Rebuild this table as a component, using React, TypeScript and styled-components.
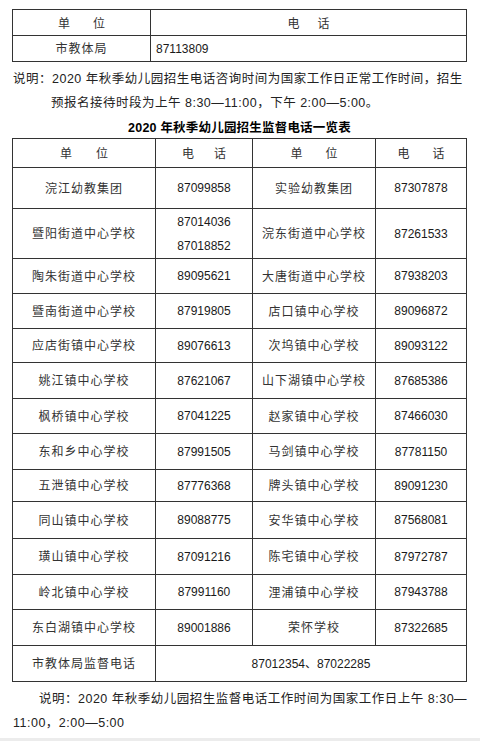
import * as React from 'react';
import styled, { createGlobalStyle } from 'styled-components';

const GlobalStyle = createGlobalStyle`
	html, body {
		margin: 0;
		padding: 0;
		background: #ececec;
	}
	body {
		font-family: 'Liberation Sans', 'Noto Sans CJK SC', sans-serif;
		color: #222;
	}
`;

type Row = {
	h: number;
	a: string;
	ap: string[];
	b: string;
	bp: string;
};

const rows: Row[] = [
	{ h: 41, a: '浣江幼教集团', ap: ['87099858'], b: '实验幼教集团', bp: '87307878' },
	{ h: 50, a: '暨阳街道中心学校', ap: ['87014036', '87018852'], b: '浣东街道中心学校', bp: '87261533' },
	{ h: 35, a: '陶朱街道中心学校', ap: ['89095621'], b: '大唐街道中心学校', bp: '87938203' },
	{ h: 35, a: '暨南街道中心学校', ap: ['87919805'], b: '店口镇中心学校', bp: '89096872' },
	{ h: 34, a: '应店街镇中心学校', ap: ['89076613'], b: '次坞镇中心学校', bp: '89093122' },
	{ h: 36, a: '姚江镇中心学校', ap: ['87621067'], b: '山下湖镇中心学校', bp: '87685386' },
	{ h: 35, a: '枫桥镇中心学校', ap: ['87041225'], b: '赵家镇中心学校', bp: '87466030' },
	{ h: 36, a: '东和乡中心学校', ap: ['87991505'], b: '马剑镇中心学校', bp: '87781150' },
	{ h: 32, a: '五泄镇中心学校', ap: ['87776368'], b: '牌头镇中心学校', bp: '89091230' },
	{ h: 37, a: '同山镇中心学校', ap: ['89088775'], b: '安华镇中心学校', bp: '87568081' },
	{ h: 36, a: '璜山镇中心学校', ap: ['87091216'], b: '陈宅镇中心学校', bp: '87972787' },
	{ h: 35, a: '岭北镇中心学校', ap: ['87991160'], b: '浬浦镇中心学校', bp: '87943788' },
	{ h: 36, a: '东白湖镇中心学校', ap: ['89001886'], b: '荣怀学校', bp: '87322685' },
];

const HeadLabel = ({ text, gap }: { text: [string, string]; gap: number }) => (
	<HeadText $gap={gap}>
		<span>{text[0]}</span>
		<span>{text[1]}</span>
	</HeadText>
);

const App = () => {
	return (
		<>
			<GlobalStyle />
			<Page>
				<Table>
					<colgroup>
						<col style={{ width: 138 }} />
						<col />
					</colgroup>
					<tbody>
						<Tr $h={26}>
							<Td>
								<HeadLabel text={['单', '位']} gap={23} />
							</Td>
							<Td>
								<HeadLabel text={['电', '话']} gap={18} />
							</Td>
						</Tr>
						<Tr $h={26}>
							<Td>
								<Unit>市教体局</Unit>
							</Td>
							<Td $left>
								<Phone>87113809</Phone>
							</Td>
						</Tr>
					</tbody>
				</Table>

				<Note $top={5}>
					<NoteLine>说明：2020 年秋季幼儿园招生电话咨询时间为国家工作日正常工作时间，招生</NoteLine>
					<NoteLine $indent={39}>预报名接待时段为上午 8:30—11:00，下午 2:00—5:00。</NoteLine>
				</Note>

				<Title>2020 年秋季幼儿园招生监督电话一览表</Title>

				<Table>
					<colgroup>
						<col style={{ width: 143 }} />
						<col style={{ width: 97 }} />
						<col style={{ width: 123 }} />
						<col />
					</colgroup>
					<tbody>
						<Tr $h={29}>
							<Td>
								<HeadLabel text={['单', '位']} gap={24} />
							</Td>
							<Td>
								<HeadLabel text={['电', '话']} gap={20} />
							</Td>
							<Td>
								<HeadLabel text={['单', '位']} gap={23} />
							</Td>
							<Td>
								<HeadLabel text={['电', '话']} gap={23} />
							</Td>
						</Tr>
						{rows.map((r) => (
							<Tr key={r.a} $h={r.h}>
								<Td>
									<Unit>{r.a}</Unit>
								</Td>
								<Td>
									{r.ap.map((p) => (
										<Phone key={p} $stack={r.ap.length > 1}>
											{p}
										</Phone>
									))}
								</Td>
								<Td>
									<Unit>{r.b}</Unit>
								</Td>
								<Td>
									<Phone>{r.bp}</Phone>
								</Td>
							</Tr>
						))}
						<Tr $h={36}>
							<Td>
								<Unit>市教体局监督电话</Unit>
							</Td>
							<Td colSpan={3}>
								<Phone>87012354、87022285</Phone>
							</Td>
						</Tr>
					</tbody>
				</Table>

				<Note $top={5}>
					<NoteLine $indent={27}>说明：2020 年秋季幼儿园招生监督电话工作时间为国家工作日上午 8:30—</NoteLine>
					<NoteLine>11:00，2:00—5:00</NoteLine>
				</Note>
			</Page>
		</>
	);
};

const Page = styled.div`
	width: 480px;
	height: 738px;
	box-sizing: border-box;
	padding: 9px 13px 0 12px;
	background: #fff;
	overflow: hidden;
`;

const Table = styled.table`
	width: 455px;
	border-collapse: collapse;
	table-layout: fixed;
	border: 1px solid #333;
`;

const Tr = styled.tr<{ $h: number }>`
	height: ${(p) => p.$h}px;
`;

const Td = styled.td<{ $left?: boolean }>`
	border: 1px solid #333;
	padding: 0 ${(p) => (p.$left ? '5px' : '0')};
	text-align: ${(p) => (p.$left ? 'left' : 'center')};
	vertical-align: middle;
	box-sizing: border-box;
`;

const HeadText = styled.div<{ $gap: number }>`
	display: inline-flex;
	gap: ${(p) => p.$gap}px;
	font-size: 12px;
	line-height: 16px;
	color: #333;
	padding-top: 2px;
`;

const Unit = styled.div`
	font-size: 12px;
	letter-spacing: 1px;
	line-height: 16px;
	color: #333;
	padding-top: 1px;
`;

const Phone = styled.div<{ $stack?: boolean }>`
	font-size: 12px;
	line-height: ${(p) => (p.$stack ? '24px' : '16px')};
	color: #1a1a1a;
`;

const Note = styled.div<{ $top: number }>`
	margin-top: ${(p) => p.$top}px;
	font-size: 12.5px;
	letter-spacing: 0.5px;
	line-height: 24px;
	color: #222;
`;

const NoteLine = styled.div<{ $indent?: number }>`
	white-space: nowrap;
	padding-left: ${(p) => p.$indent ?? 1}px;
`;

const Title = styled.div`
	margin-top: 3px;
	height: 20px;
	line-height: 20px;
	text-align: center;
	font-size: 12.5px;
	letter-spacing: 0.2px;
	font-weight: bold;
	color: #000;
`;

export default App;
